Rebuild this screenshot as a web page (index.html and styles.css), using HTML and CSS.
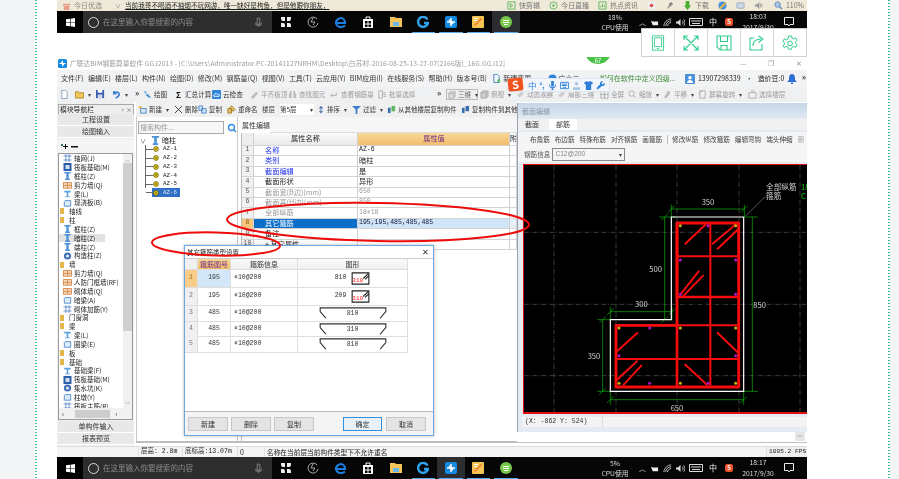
FILE: index.html
```html
<!DOCTYPE html>
<html lang="zh">
<head>
<meta charset="utf-8">
<title>钢筋算量</title>
<link rel="stylesheet" href="styles.css">
</head>
<body>
<svg class="defs" width="0" height="0">
  <symbol id="win" viewBox="0 0 10 10"><path fill="#fff" d="M0 1.400 4.400.8v3.900H0zM5.100.7 10 0v4.700H5.100zM0 5.400h4.400v3.900L0 8.700zM5.100 5.400H10V10l-4.900-.7z"/></symbol>
  <symbol id="fan" viewBox="0 0 12 12"><path fill="#eee" d="M1 1h4v4H3C1 5 1 3 1 1zM7 1h4c0 2 0 4-2 4H7zM1 11V7h2c2 0 2 2 2 4zM11 11H7V7h2c2 0 2 2 2 4z"/></symbol>
  <symbol id="swirl" viewBox="0 0 12 12"><path fill="none" stroke="#aaa" d="M10 3A5 5 0 1 0 11 7M6 2 4 6h4L6 9"/></symbol>
  <symbol id="edge" viewBox="0 0 12 12"><path fill="none" stroke="#1a7fe0" stroke-width="2.200" d="M2 7h8c0-3-2-5-4-5S1 4 1 6.500 3 11 6 11c2 0 3-.6 4-1.500"/></symbol>
  <symbol id="bag" viewBox="0 0 12 12"><path fill="#fff" d="M1 3h10v9H1z"/><path fill="none" stroke="#fff" d="M4 3V1h4v2"/><path fill="#000" d="M3 5h2.500v2.500H3zM6.500 5H9v2.500H6.500zM3 8.500h2.500V11H3zM6.500 8.500H9V11H6.500z"/></symbol>
  <symbol id="folder" viewBox="0 0 12 12"><path fill="#f2c55c" d="M0 1h5l1 1h6v9H0z"/><path fill="#6cb6e8" d="M3 6h6v4H3z"/></symbol>
  <symbol id="gapp" viewBox="0 0 12 12"><path fill="none" stroke="#2fa3ee" stroke-width="2.400" d="M10.500 3.500A5 5 0 1 0 11 7H7"/></symbol>
  <symbol id="gld" viewBox="0 0 12 12"><rect width="12" height="12" rx="2" fill="#1589e0"/><path fill="none" stroke="#fff" stroke-width="1.500" d="M6 2v8M2 6h8M4 4l4 4"/></symbol>
  <symbol id="note" viewBox="0 0 12 12"><rect width="12" height="12" rx="1" fill="#f6c453"/><path fill="#e9783a" d="M2 9 9 2l1 1-7 7z"/><path fill="#fff" d="M2 2h4v1H2zM2 4h3v1H2z"/></symbol>
  <symbol id="greenc" viewBox="0 0 12 12"><circle cx="6" cy="6" r="6" fill="#77c74a"/><path fill="#fff" d="M3 4h6v1H3zM3 6h6v1H3zM4 8h4v1H4z"/></symbol>
  <symbol id="pillar" viewBox="0 0 10 10"><path fill="#4f93d8" d="M1 0h8v2H6.500v6H8v2H2V8h1.500V2H1z"/></symbol>
  <symbol id="grid" viewBox="0 0 10 10"><path fill="none" stroke="#4f7fc9" d="M0 2.500h10M0 7.500h10M3 0v10M7 0v10"/></symbol>
  <symbol id="slab" viewBox="0 0 10 10"><rect width="10" height="10" fill="#2b5ea7"/><rect x="2.500" y="2.500" width="5" height="5" fill="#cfe0f2"/></symbol>
  <symbol id="wall" viewBox="0 0 10 10"><rect y="2" width="10" height="7" fill="#f3d6b8" stroke="#d2813f"/><path stroke="#d2813f" d="M0 5.500h10M5 2v7"/></symbol>
  <symbol id="beam" viewBox="0 0 10 10"><path fill="#5ba1e0" d="M1 1h8v2H6v5h2v1H2V8h2V3H1z"/></symbol>
  <symbol id="plate" viewBox="0 0 10 10"><path fill="#dcebfa" stroke="#3f7cc4" d="M2 2h7v7H1V3z"/></symbol>
  <symbol id="ball" viewBox="0 0 10 10"><circle cx="5" cy="5" r="4.500" fill="#3f6fb6"/><circle cx="5" cy="5" r="2" fill="#dfe9f5"/></symbol>
  <symbol id="dotaz" viewBox="0 0 8 8"><circle cx="4" cy="4" r="3.200" fill="#dcc81e" stroke="#6a5d00"/><circle cx="4" cy="4" r="1" fill="#5a4f00"/></symbol>
  <symbol id="gear" viewBox="0 0 16 16"><path fill="none" stroke="#2ecc8a" d="M6.500 1h3l.5 2 1.700.8 1.900-1 1.500 2.600-1.500 1.400v1.600l1.500 1.400-1.500 2.600-1.900-1-1.700.8-.5 2h-3l-.5-2-1.700-.8-1.900 1L.9 10.800l1.500-1.400V7.800L.9 6.400l1.500-2.600 1.900 1L6 4z"/><circle cx="8" cy="8.500" r="2.400" fill="none" stroke="#2ecc8a"/></symbol>
  <symbol id="hook3" viewBox="0 0 74 16"><path fill="none" stroke="#333" stroke-width="1.200" d="M8 14 2 7V3h70v4l-6 7"/></symbol>
  <symbol id="closedbox" viewBox="0 0 20 14"><path fill="none" stroke="#222" stroke-width="1.200" d="M1 1h18v12H1zM13 7l5-5M15 8l4-4"/></symbol>
</svg>

<div class="pagebg">
  <div class="gutter"></div>
  <div class="dots"></div>
  <div class="pad-left"></div>

  <main class="screen">
    <div class="browserbar">
      <div class="bb-left">
        <svg class="i9" viewBox="0 0 10 10"><path fill="#eb9c86" d="M1 3h8v2H1zM2 5.500h6V10H2z"/></svg>
        <span class="bb-dim">今日优选</span>
        <span class="bb-caret">∨</span>
        <span class="bb-link">当前我哥不喝酒不抽烟不玩网游，唯一缺好是枸鱼，但是他跟你朋友，</span>
      </div>
      <div class="bb-right">
        <span class="bb-item"><svg class="i9" viewBox="0 0 10 10"><path fill="none" stroke="#5cb85c" d="M1 1h8v8H1zM3.500 3l3 2-3 2z"/></svg>快剪辑</span>
        <span class="bb-item"><svg class="i9" viewBox="0 0 10 10"><circle cx="5" cy="5" r="4" fill="none" stroke="#5cb85c"/><path fill="#5cb85c" d="M4 3l3 2-3 2z"/></svg>今日直播</span>
        <span class="bb-item"><svg class="i9" viewBox="0 0 10 10"><path fill="none" stroke="#5cb85c" d="M1 1h8v8H1zM3 5v2M5 3v4M7 4v3"/></svg>热点资讯</span>
        <svg class="i9" viewBox="0 0 10 10"><rect x="1" y="1" width="8" height="8" fill="#eee"/><circle cx="5" cy="5" r="2" fill="#d9534f"/></svg>
        <svg class="i9" viewBox="0 0 10 10"><path fill="#888" d="M2 9l3-5-1-1 3-2 2 3-2 1-1 1z"/></svg>
        <span class="bb-item"><svg class="i9" viewBox="0 0 10 10"><path fill="#4caf2f" d="M3 0h4v5h2L5 10 1 5h2z"/></svg>下载</span>
        <svg class="i9" viewBox="0 0 10 10"><circle cx="5" cy="5" r="4.500" fill="#4a90d9"/><path fill="#e9b83a" d="M1 8l7-7 1 2-6 6z"/></svg>
        <svg class="i9" viewBox="0 0 10 10"><rect x="1" y="2" width="8" height="6" rx="1" fill="#cfd9e6" stroke="#98a8bc"/></svg>
        <svg class="i9" viewBox="0 0 10 10"><path fill="#999" d="M1 4h2l3-3v8L3 6H1z"/><path stroke="#999" fill="none" d="M7 3l2 4M9 3 7 7"/></svg>
        <span class="bb-item bb-zoom"><svg class="i9" viewBox="0 0 10 10"><circle cx="4" cy="4" r="3" fill="#a9c6e8" stroke="#5b86b8"/><path stroke="#5b86b8" stroke-width="1.500" d="M6 6l3 3"/></svg>110%</span>
      </div>
    </div>

    <div class="taskbar">
      <div class="tb-start"><svg class="i10"><use href="#win"/></svg></div>
      <div class="tb-search">
        <span class="cortana"></span>
        <span class="tb-ph">在这里输入你要搜索的内容</span>
        <svg class="mic" viewBox="0 0 8 12"><path fill="none" stroke="#8a8a8a" d="M2.500 1h3v7h-3zM1 6v3h6V6M4 9v2"/></svg>
      </div>
      <div class="tb-apps">
        <span class="app"><svg class="i12"><use href="#fan"/></svg></span>
        <span class="app"><svg class="i12"><use href="#swirl"/></svg></span>
        <span class="app"><svg class="i12"><use href="#edge"/></svg></span>
        <span class="app"><svg class="i12"><use href="#bag"/></svg></span>
        <span class="app"><svg class="i12"><use href="#folder"/></svg></span>
        <span class="app on"><svg class="i12"><use href="#gapp"/></svg></span>
        <span class="app on"><svg class="i12"><use href="#gld"/></svg></span>
        <span class="app on"><svg class="i12"><use href="#note"/></svg></span>
        <span class="app on act"><svg class="i12"><use href="#greenc"/></svg></span>
      </div>
      <div class="tb-cpu"><span>18%</span><span>CPU使用</span></div>
      <div class="tb-tray">
        <span class="tray-ch">︿</span>
        <svg class="i9" viewBox="0 0 10 10"><path fill="#eee" d="M1 3l2 1h6v4H3z"/></svg>
        <svg class="i9" viewBox="0 0 10 10"><path fill="none" stroke="#ccc" d="M1 9C1 5 5 1 9 1M3 9c0-3 3-6 6-6M5 9c0-2 2-4 4-4"/></svg>
        <svg class="i9" viewBox="0 0 10 10"><path fill="#ddd" d="M0 4h2l3-3v8L2 6H0z"/><path fill="none" stroke="#ddd" d="M7 3c1 1 1 3 0 4M8.500 1.500c2 2 2 5 0 7"/></svg>
        <svg class="kbd" viewBox="0 0 14 8"><path fill="none" stroke="#ddd" d="M.5.5h13v7H.5zM2 3h10M3 5.500h8"/></svg>
        <span class="tray-zh">中</span>
        <span class="tray-s">S</span>
      </div>
      <div class="tb-clock"><span>18:03</span><span class="d">2017/9/30</span></div>
      <div class="tb-note"><svg class="i10x" viewBox="0 0 10 10"><path fill="none" stroke="#eee" d="M.5.5h9v7H6L5 9 4 7.500H.5z"/></svg></div>
    </div>

    <div class="gap24"></div>

    <div class="titlebar">
      <svg class="i9" viewBox="0 0 12 12"><use href="#gld"/></svg>
      <span class="title-text">广联达BIM钢筋算量软件 GGJ2013 - [C:\Users\Administrator.PC-20141127NRHM\Desktop\白苏村-2016-08-25-13-27-07(2166版)_16G.GGJ12]</span>
      <span class="winbtns"><span>—</span><span class="wb-max">❐</span><span>✕</span></span>
    </div>

    <nav class="menubar">
      <span>文件(F)</span><span>编辑(E)</span><span>楼层(L)</span><span>构件(N)</span><span>绘图(D)</span><span>修改(M)</span><span>钢筋量(Q)</span><span>视图(V)</span><span>工具(T)</span><span>云应用(Y)</span><span>BIM应用(I)</span><span>在线服务(S)</span><span>帮助(H)</span><span>版本号(B)</span>
      <span class="m-new"><svg class="i9" viewBox="0 0 10 10"><path fill="#eef5ff" stroke="#4a7fc0" d="M2 .5h4l2 2v7H2z"/><path fill="#5cb85c" d="M6 6h3v3H6z"/></svg>新建变更</span>
      <span class="m-gg"><svg class="i9" viewBox="0 0 10 10"><circle cx="5" cy="5" r="4.500" fill="#2f86d9"/></svg>广小二</span>
      <span class="m-hint">如何在软件中定义四级...</span>
      <span class="m-phone"><svg class="i10b" viewBox="0 0 10 10"><rect width="10" height="10" rx="1" fill="#4a90d9"/><circle cx="5" cy="3.800" r="1.800" fill="#fff"/><path fill="#fff" d="M2 9c0-2 1.500-3 3-3s3 1 3 3z"/></svg>13907298339 <i>•</i> 造价豆:0<svg class="i10b" viewBox="0 0 10 10"><path fill="#2f6fd0" d="M5 0c2 0 3 2 3 4v2l2 2H0l2-2V4c0-2 1-4 3-4zM4 8.500h2V10H4z"/></svg></span>
      <span class="more">»</span>
    </nav>

    <div class="toolbar1">
      <svg class="i9" viewBox="0 0 10 10"><path fill="#fff" stroke="#8aa0bd" d="M2 .5h4l2 2v7H2z"/></svg>
      <span class="ti"><svg class="i9" viewBox="0 0 10 10"><path fill="#f0c65a" stroke="#b08a2a" d="M.5 2h3l1 1h5v6H.5z"/></svg><b class="ar">▾</b></span>
      <svg class="i9" viewBox="0 0 10 10"><rect width="9" height="9" fill="#3a5fb0"/><rect x="2" y="0" width="5" height="3" fill="#fff"/><rect x="2" y="5" width="5" height="4" fill="#cfdaf0"/></svg>
      <span class="ti"><svg class="i9" viewBox="0 0 10 10"><path fill="none" stroke="#3a7fd0" stroke-width="1.800" d="M2 1v3h3M2.500 4C4 1.500 8 2 8 5c0 2-2 3-4 4"/></svg><b class="ar">▾</b></span>
      <span class="more">»</span>
      <span class="ti"><svg class="i9" viewBox="0 0 10 10"><path fill="#5b9bd5" d="M1 1l3 1-1 3zM5 4l4 4-2 1-4-3z"/></svg>绘图</span>
      <span class="ti"><b class="sig">Σ</b>汇总计算</span>
      <span class="ti"><svg class="i9" viewBox="0 0 10 10"><rect width="10" height="10" rx="1" fill="#2f86d9"/><path fill="none" stroke="#fff" d="M2 7h6c1-2-1-3-2-2-1-2-3-1-3 0-1 0-2 1-1 2z"/></svg>云检查</span>
      <span class="ti off"><svg class="i9" viewBox="0 0 10 10"><path fill="#bbb" d="M1 8l6-6 2 2-6 6z"/></svg>平齐板顶</span>
      <span class="ti off"><svg class="i9" viewBox="0 0 10 10"><path fill="#bbb" d="M1 4h3v5H1zM6 4h3v5H6zM2 1h2v3H2zM6 1h2v3H6z"/></svg>查找图元</span>
      <span class="ti off"><svg class="i9" viewBox="0 0 10 10"><path fill="none" stroke="#aaa" d="M1 6h6V3M3 4 1 6l2 2"/></svg>查看钢筋量</span>
      <span class="ti off"><svg class="i9" viewBox="0 0 10 10"><path fill="none" stroke="#aaa" d="M1 1h4v8H1zM6 3h3M6 5h3M6 7h3"/></svg>批量选择</span>
      <span class="more">»</span>
      <span class="combo3"><svg class="i8" viewBox="0 0 10 10"><path fill="#ddd" stroke="#aaa" d="M1 3h6v6H1zM1 3l2-2h6v6L7 9"/></svg>三维<b class="ar">▾</b></span>
      <span class="ti off"><svg class="i9" viewBox="0 0 10 10"><path fill="#ccc" stroke="#aaa" d="M1 3h6v6H1zM1 3l2-2h6v6L7 9"/></svg>俯视<b class="ar">▾</b></span>
      <span class="ti off"><svg class="i9" viewBox="0 0 10 10"><path fill="#ccc" d="M1 6l5-4 3 2-5 4z"/></svg>动态观察</span>
      <span class="ti off"><svg class="i9" viewBox="0 0 10 10"><path fill="#ccc" d="M1 6l5-4 3 2-5 4z"/></svg>局部三维</span>
      <span class="ti off"><svg class="i9" viewBox="0 0 10 10"><path fill="none" stroke="#aaa" d="M1 1h8v8H1zM5 1v8M1 5h8"/></svg>全屏</span>
      <span class="ti off"><svg class="i9" viewBox="0 0 10 10"><circle cx="4" cy="4" r="3" fill="none" stroke="#aaa"/><path stroke="#aaa" d="M6 6l3 3"/></svg>缩放<b class="ar">▾</b></span>
      <span class="ti off"><svg class="i9" viewBox="0 0 10 10"><path fill="#bbb" d="M1 9l3-5 1-3 3 1-1 3-3 4z"/></svg>平移<b class="ar">▾</b></span>
      <span class="ti off"><svg class="i9" viewBox="0 0 10 10"><path fill="none" stroke="#aaa" d="M2 1h6v8H2zM1 5a4 4 0 0 1 4-4"/></svg>屏幕旋转<b class="ar">▾</b></span>
      <span class="ti off"><svg class="i9" viewBox="0 0 10 10"><path fill="none" stroke="#aaa" d="M1 3h8v6H1zM3 1h4"/></svg>选择楼层</span>
    </div>

    <div class="workspace">
      <aside class="sidebar">
        <div class="nav-head"><span>模块导航栏</span><span class="nav-pin">ᛜ ×</span></div>
        <div class="nav-btn">工程设置</div>
        <div class="nav-btn">绘图输入</div>
        <div class="nav-tools"><svg class="pm" viewBox="0 0 18 8"><path fill="#111" d="M2 3h2V1h1v2h2v1H5v2H4V4H2zM10 3h7v1.500h-7z"/><path fill="#2a7a5a" d="M0 1h2v2H0z"/></svg></div>
        <div class="nav-list">
          <div class="nav-scroll">
            <ul class="navtree">
              <li class="leaf"><svg><use href="#grid"/></svg>轴网(J)</li>
              <li class="leaf"><svg><use href="#slab"/></svg>筏板基础(M)</li>
              <li class="leaf"><svg><use href="#pillar"/></svg>框柱(Z)</li>
              <li class="leaf"><svg><use href="#wall"/></svg>剪力墙(Q)</li>
              <li class="leaf"><svg><use href="#beam"/></svg>梁(L)</li>
              <li class="leaf"><svg><use href="#plate"/></svg>现浇板(B)</li>
              <li class="grp closed">轴线</li>
              <li class="grp">柱</li>
              <li class="leaf"><svg><use href="#pillar"/></svg>框柱(Z)</li>
              <li class="leaf sel"><svg><use href="#pillar"/></svg>暗柱(Z)</li>
              <li class="leaf"><svg><use href="#pillar"/></svg>端柱(Z)</li>
              <li class="leaf"><svg><use href="#ball"/></svg>构造柱(Z)</li>
              <li class="grp">墙</li>
              <li class="leaf"><svg><use href="#wall"/></svg>剪力墙(Q)</li>
              <li class="leaf"><svg><use href="#wall"/></svg>人防门框墙(RF)</li>
              <li class="leaf"><svg><use href="#wall"/></svg>砌体墙(Q)</li>
              <li class="leaf"><svg><use href="#plate"/></svg>暗梁(A)</li>
              <li class="leaf"><svg><use href="#grid"/></svg>砌体加筋(Y)</li>
              <li class="grp closed">门窗洞</li>
              <li class="grp">梁</li>
              <li class="leaf"><svg><use href="#beam"/></svg>梁(L)</li>
              <li class="leaf"><svg><use href="#plate"/></svg>圈梁(E)</li>
              <li class="grp closed">板</li>
              <li class="grp">基础</li>
              <li class="leaf"><svg><use href="#beam"/></svg>基础梁(F)</li>
              <li class="leaf"><svg><use href="#slab"/></svg>筏板基础(M)</li>
              <li class="leaf"><svg><use href="#ball"/></svg>集水坑(K)</li>
              <li class="leaf"><svg><use href="#plate"/></svg>柱墩(Y)</li>
              <li class="leaf"><svg><use href="#grid"/></svg>筏板主筋(R)</li>
            </ul>
            <div class="vscroll"><span>︿</span><i></i><span>﹀</span></div>
          </div>
          <div class="hscroll"><span>‹</span><i></i><span>›</span></div>
        </div>
        <div class="nav-btn">单构件输入</div>
        <div class="nav-btn">报表预览</div>
      </aside>

      <section class="center">
        <div class="toolbar2">
          <span class="ti"><svg class="i9" viewBox="0 0 10 10"><circle cx="2.500" cy="2.500" r="1.500" fill="#e8b93a"/><rect x="3" y="4" width="6" height="5" fill="#dbe9f8" stroke="#4a87c8"/></svg>新建<b class="ar">▾</b></span>
          <span class="ti"><svg class="i9" viewBox="0 0 10 10"><path stroke="#333" d="M1 1l8 8M9 1 1 9"/></svg>删除</span>
          <span class="ti"><svg class="i9" viewBox="0 0 10 10"><path fill="#cfe2f7" stroke="#4a87c8" d="M1 1h4v5H1zM4 4h5v5H4z"/></svg>复制</span>
          <span class="ti"><svg class="i9" viewBox="0 0 10 10"><path fill="#e5c26a" stroke="#a07a20" d="M1 4h4v5H1zM5 1l4 4-2 2-4-4z"/></svg>重命名</span>
          <span class="t2-floor">楼层</span>
          <span class="t2-sel"><span>第5层</span><b class="ar">▾</b></span>
          <span class="ti"><b class="sort">↕</b>排序<b class="ar">▾</b></span>
          <span class="ti"><svg class="i9" viewBox="0 0 10 10"><path fill="#3a7fd0" d="M0 1h10L6 5v5H4V5z"/></svg>过滤<b class="ar">▾</b></span>
          <span class="ti"><svg class="i9" viewBox="0 0 10 10"><path fill="#3a6fb0" d="M1 3h3v6H1z"/><path fill="#5cb85c" d="M5 1h4v6H5z"/></svg>从其他楼层复制构件</span>
          <span class="ti"><svg class="i9" viewBox="0 0 10 10"><path fill="#3a6fb0" d="M1 3h3v6H1zM5 1h4v6H5z"/></svg>复制构件到其他</span>
        </div>
        <div class="center-row">
          <div class="treepane">
            <div class="searchrow">
              <span class="searchbox">搜索构件...</span>
              <svg class="searchico" viewBox="0 0 10 10"><circle cx="4.500" cy="4.500" r="3" fill="none" stroke="#2e8be0" stroke-width="1.400"/><path stroke="#2e8be0" stroke-width="1.400" d="M6.500 6.500 9 9"/></svg>
            </div>
            <div class="tree">
              <div class="tree-root"><span class="caret">∨</span><svg class="i9" viewBox="0 0 10 10"><use href="#pillar"/></svg>暗柱</div>
              <div class="tree-item"><svg class="i7"><use href="#dotaz"/></svg>AZ-1</div>
              <div class="tree-item"><svg class="i7"><use href="#dotaz"/></svg>AZ-2</div>
              <div class="tree-item"><svg class="i7"><use href="#dotaz"/></svg>AZ-3</div>
              <div class="tree-item"><svg class="i7"><use href="#dotaz"/></svg>AZ-4</div>
              <div class="tree-item"><svg class="i7"><use href="#dotaz"/></svg>AZ-5</div>
              <div class="tree-item last"><span class="tree-sel"><svg class="i7"><use href="#dotaz"/></svg>AZ-6</span></div>
            </div>
          </div>
          <div class="proppane">
            <div class="proptabs"><span class="proptab">属性编辑</span></div>
            <div class="proptable">
              <div class="prow phead"><span class="pn"></span><span class="pk">属性名称</span><span class="pv hl">属性值</span><span class="px">附</span></div>
              <div class="prow"><span class="pn">1</span><span class="pk blue">名称</span><span class="pv mono">AZ-6</span><span class="px"></span></div>
              <div class="prow"><span class="pn">2</span><span class="pk blue">类别</span><span class="pv">暗柱</span><span class="px"></span></div>
              <div class="prow"><span class="pn">3</span><span class="pk blue">截面编辑</span><span class="pv">是</span><span class="px"></span></div>
              <div class="prow"><span class="pn">4</span><span class="pk">截面形状</span><span class="pv">异形</span><span class="px"></span></div>
              <div class="prow"><span class="pn">5</span><span class="pk gray">截面宽(B边)(mm)</span><span class="pv gray mono">650</span><span class="px"></span></div>
              <div class="prow"><span class="pn">6</span><span class="pk gray">截面高(H边)(mm)</span><span class="pv gray mono">850</span><span class="px"></span></div>
              <div class="prow"><span class="pn">7</span><span class="pk gray">全部纵筋</span><span class="pv gray mono">18⚘18</span><span class="px"></span></div>
              <div class="prow psel"><span class="pn">8</span><span class="pk">其它箍筋</span><span class="pv mono">195,195,485,485,485</span><span class="px"></span></div>
              <div class="prow"><span class="pn">9</span><span class="pk">备注</span><span class="pv"></span><span class="px"></span></div>
              <div class="prow"><span class="pn">10</span><span class="pk">+ 其它属性</span><span class="pv"></span><span class="px"></span></div>
            </div>
          </div>
        </div>
      </section>

      <section class="editor">
        <div class="ed-panel">
          <div class="ed-head">截面编辑</div>
          <div class="ed-tabs"><span>截面</span><span class="on">部筋</span></div>
          <div class="ed-tools"><span>布角筋</span><span>布边筋</span><span>特殊布筋</span><span>对齐钢筋</span><span>画箍筋</span><span class="sep"></span><span>修改纵筋</span><span>修改箍筋</span><span>编辑弯钩</span><span>端头伸缩</span><span class="dim">删</span></div>
          <div class="ed-info"><span>钢筋信息</span><span class="ed-combo">C12@200<b class="ar">▾</b></span></div>
          <div class="canvas">
            <svg class="cad" viewBox="-144 -24 852 744">
              <g stroke="#777" stroke-width="1.500" stroke-dasharray="14 5 2 5" fill="none">
                <path d="M-54-24V723M132-24V723M315-24V723M501-24V723M684-24V723M-144 178H708M-144 394H708M-144 608H708"/>
              </g>
              <g stroke="#0a9a0a" stroke-width="2.400" fill="none">
                <path d="M298 108H517M298 95V132M517 95V132M288 118l20-20M507 118l20-20"/>
                <path d="M278 132V440M262 132H312M262 440H300M268 142l20-20M268 450l20-20"/>
                <path d="M115 416H300M115 402V440M300 402V440M105 426l20-20M290 426l20-20"/>
                <path d="M92 440V655M76 440H115M76 655H115M82 450l20-20M82 665l20-20"/>
                <path d="M115 680H515M115 655V695M515 655V695M105 690l20-20M505 690l20-20"/>
                <path d="M541 132V655M515 132H557M515 655H557"/>
              </g>
              <path d="M520 130 580 70" stroke="#888" stroke-width="2" fill="none"/>
              <path d="M298 132H515V655H115V440H298Z" fill="none" stroke="#fff" stroke-width="3.600"/>
              <g stroke="#f60c0c" fill="none" stroke-linecap="round">
                <path stroke-width="8.500" stroke-linejoin="round" d="M315 150H500V642H132V457H315Z"/>
                <path stroke-width="6" d="M415 150V642M315 250H500M132 457H500M137 558H500"/>
                <path stroke-width="8" d="M315 457V642M322 372H495M315 150V372"/>
                <path stroke-width="6" d="M340 212 400 155M422 212 490 155M437 227 497 170M325 365 380 295M335 368 393 308M135 535 196 480M135 620 195 565M155 635 208 578M340 575 405 635M437 480 497 538"/>
              </g>
              <g fill="#c8b414">
                <circle cx="325" cy="158" r="4.500"/><circle cx="491" cy="158" r="4.500"/><circle cx="325" cy="465" r="4.500"/><circle cx="491" cy="465" r="4.500"/><circle cx="141" cy="465" r="4.500"/><circle cx="141" cy="631" r="4.500"/><circle cx="325" cy="631" r="4.500"/><circle cx="491" cy="631" r="4.500"/>
              </g>
              <g fill="#b010c8">
                <circle cx="408" cy="158" r="4.500"/><circle cx="325" cy="261" r="4.500"/><circle cx="491" cy="261" r="4.500"/><circle cx="325" cy="364" r="4.500"/><circle cx="491" cy="364" r="4.500"/><circle cx="233" cy="465" r="4.500"/><circle cx="141" cy="548" r="4.500"/><circle cx="491" cy="548" r="4.500"/><circle cx="233" cy="631" r="4.500"/><circle cx="408" cy="631" r="4.500"/>
              </g>
              <g class="cadtxt" fill="#cfcfcf" text-anchor="middle">
                <text x="408" y="95">350</text>
                <text x="251" y="296">500</text>
                <text x="208" y="401">300</text>
                <text x="66" y="557">350</text>
                <text x="315" y="713">650</text>
                <text x="563" y="404">850</text>
              </g>
              <g class="cadtxt" fill="#cfcfcf">
                <text x="582" y="52">全部纵筋</text>
                <text x="582" y="78">箍筋</text>
              </g>
              <g class="cadtxt" fill="#13d013">
                <text x="687" y="52">18</text>
                <text x="687" y="78">C1</text>
              </g>
            </svg>
          </div>
          <div class="ed-status"><span class="coord">(X: -862 Y: 524)</span><span class="coord-rest"></span></div>
        </div>
        <div class="ed-bottom"><span class="down-arrow">﹀</span></div>
      </section>
    </div>

    <div class="statusbar">
      <span class="s0"></span><span class="s1">层高: 2.8m</span><span class="s2">底标高:13.07m</span><span class="s3">0</span><span class="s4">名称在当前层当前构件类型下不允许重名</span><span class="s5">1005.2 FPS</span>
    </div>

    <div class="taskbar">
      <div class="tb-start"><svg class="i10"><use href="#win"/></svg></div>
      <div class="tb-search">
        <span class="cortana"></span>
        <span class="tb-ph">在这里输入你要搜索的内容</span>
        <svg class="mic" viewBox="0 0 8 12"><path fill="none" stroke="#8a8a8a" d="M2.500 1h3v7h-3zM1 6v3h6V6M4 9v2"/></svg>
      </div>
      <div class="tb-apps">
        <span class="app"><svg class="i12"><use href="#fan"/></svg></span>
        <span class="app"><svg class="i12"><use href="#swirl"/></svg></span>
        <span class="app"><svg class="i12"><use href="#edge"/></svg></span>
        <span class="app"><svg class="i12"><use href="#bag"/></svg></span>
        <span class="app"><svg class="i12"><use href="#folder"/></svg></span>
        <span class="app on"><svg class="i12"><use href="#gapp"/></svg></span>
        <span class="app on act"><svg class="i12"><use href="#gld"/></svg></span>
        <span class="app on"><svg class="i12"><use href="#note"/></svg></span>
        <span class="app on"><svg class="i12"><use href="#greenc"/></svg></span>
      </div>
      <div class="tb-cpu"><span>5%</span><span>CPU使用</span></div>
      <div class="tb-tray">
        <span class="tray-ch">︿</span>
        <svg class="i9" viewBox="0 0 10 10"><path fill="#eee" d="M1 3l2 1h6v4H3z"/></svg>
        <svg class="i9" viewBox="0 0 10 10"><path fill="none" stroke="#ccc" d="M1 9C1 5 5 1 9 1M3 9c0-3 3-6 6-6M5 9c0-2 2-4 4-4"/></svg>
        <svg class="i9" viewBox="0 0 10 10"><path fill="#ddd" d="M0 4h2l3-3v8L2 6H0z"/><path fill="none" stroke="#ddd" d="M7 3c1 1 1 3 0 4M8.500 1.500c2 2 2 5 0 7"/></svg>
        <svg class="kbd" viewBox="0 0 14 8"><path fill="none" stroke="#ddd" d="M.5.5h13v7H.5zM2 3h10M3 5.500h8"/></svg>
        <span class="tray-zh">中</span>
        <span class="tray-s">S</span>
      </div>
      <div class="tb-clock"><span>18:17</span><span class="d">2017/9/30</span></div>
      <div class="tb-note"><svg class="i10x" viewBox="0 0 10 10"><path fill="none" stroke="#eee" d="M.5.5h9v7H6L5 9 4 7.500H.5z"/></svg></div>
    </div>

    <div class="badge">67</div>

    <div class="ime">
      <span class="ime-s">S</span>
      <span class="ime-zh">中</span>
      <span class="ime-dot">°,</span>
      <svg class="i9" viewBox="0 0 10 10"><path fill="#2f7fd6" d="M3.500 0h3v6h-3zM1 4h1c0 2 1 3 3 3s3-1 3-3h1c0 3-2 4-3.500 4.300V9.500H7V10H3v-.5h1.500V8.300C3 8 1 7 1 4z"/></svg>
      <svg class="i9" viewBox="0 0 10 10"><path fill="none" stroke="#2f7fd6" d="M.5 1.500h9v7h-9zM2 3.500h6M2 5h6M3 7h4"/></svg>
      <svg class="i9" viewBox="0 0 10 10"><circle cx="5" cy="3" r="2" fill="#a8c6e6"/><path fill="#a8c6e6" d="M1 10V7h8v3z"/></svg>
      <svg class="i9" viewBox="0 0 10 10"><path fill="#2f7fd6" d="M3 0 5 1l2-1 3 2-1 2-1-.5V10H2V3.500L1 4 0 2z"/></svg>
      <svg class="i9" viewBox="0 0 10 10"><path fill="#2f7fd6" d="M9.500 2 7.500 4 6 2.500l2-2C6-.5 4 1 4.500 3.500L.5 8 2 9.500 6.500 5.500C9 6 10.500 4 9.500 2z"/></svg>
    </div>

    <div class="floatbar">
      <span class="fb"><svg viewBox="0 0 16 20"><path fill="none" stroke="#2ecc8a" stroke-width="1.100" d="M1 1h14v18H1zM3.500 3.500h9v11h-9zM6.500 17h3"/></svg></span>
      <span class="fb"><svg viewBox="0 0 16 16"><path fill="none" stroke="#2ecc8a" stroke-width="1.100" d="M1 1l14 14M15 1 1 15M1 5V1h4M11 1h4v4M15 11v4h-4M5 15H1v-4"/></svg></span>
      <span class="fb"><svg viewBox="0 0 16 16"><path fill="none" stroke="#2ecc8a" stroke-width="1.100" d="M1 1h14v14H4l-3-3zM4.500 1v5.500h7V1M5 15v-4.500h6V15"/></svg></span>
      <span class="fb"><svg viewBox="0 0 16 16"><path fill="none" stroke="#2ecc8a" stroke-width="1.100" d="M5 3H1v12h12V9M4 11c0-5 3-7 8-7M9.500 1 14 4l-4.500 3.500"/></svg></span>
      <span class="fb"><svg viewBox="0 0 16 16"><use href="#gear"/></svg></span>
    </div>

    <div class="dialog">
      <div class="dlg-title"><span>其它箍筋类型设置</span><span class="dlg-x">✕</span></div>
      <div class="dlg-table">
        <div class="drow dhead"><span class="dn"></span><span class="dc hl">箍筋图号</span><span class="dc">箍筋信息</span><span class="dc">图形</span></div>
        <div class="drow r18 first"><span class="dn act">1</span><span class="dc cellsel">195</span><span class="dc info">⚘10@200</span><span class="dc shape"><em>810</em><span class="box"><svg><use href="#closedbox"/></svg><u>310</u></span></span></div>
        <div class="drow r18"><span class="dn">2</span><span class="dc">195</span><span class="dc info">⚘10@200</span><span class="dc shape"><em>209</em><span class="box"><svg><use href="#closedbox"/></svg><u>310</u></span></span></div>
        <div class="drow r16"><span class="dn">3</span><span class="dc">485</span><span class="dc info">⚘10@200</span><span class="dc shape"><span class="hook"><svg><use href="#hook3"/></svg><em>810</em></span></span></div>
        <div class="drow r15"><span class="dn">4</span><span class="dc">485</span><span class="dc info">⚘10@200</span><span class="dc shape"><span class="hook"><svg><use href="#hook3"/></svg><em>310</em></span></span></div>
        <div class="drow r16"><span class="dn">5</span><span class="dc">485</span><span class="dc info">⚘10@200</span><span class="dc shape"><span class="hook"><svg><use href="#hook3"/></svg><em>810</em></span></span></div>
      </div>
      <div class="dlg-foot">
        <span class="btn">新建</span><span class="btn">删除</span><span class="btn">复制</span>
        <span class="btn primary">确定</span><span class="btn">取消</span>
      </div>
    </div>

    <svg class="ovals" viewBox="0 0 750 479" width="750" height="479">
      <ellipse cx="321" cy="222" rx="151" ry="19" transform="rotate(1 321 222)"/>
      <ellipse cx="159" cy="244" rx="64" ry="11.500" transform="rotate(1.500 159 244)"/>
    </svg>
  </main>

  <div class="pad-right"></div>
  <div class="dots"></div>
  <div class="gutter-r"></div>
</div>
</body>
</html>
```

FILE: styles.css
```css
* { box-sizing: border-box; }
html, body { margin: 0; height: 100%; }
body {
  width: 899px;
  height: 479px;
  overflow: hidden;
  background: #fff;
  font-family: "Noto Sans CJK SC", "Liberation Sans", sans-serif;
  font-size: 7px;
  line-height: 1;
  color: #333;
}
.defs { position: absolute; }
.pagebg { display: flex; width: 899px; height: 479px; }
.gutter { width: 35px; background: #f3f4f6; }
.gutter-r { width: 9px; background: #f3f4f6; }
.dots { width: 2px; background-image: linear-gradient(#38bf8d 50%, transparent 50%); background-size: 2px 3px; }
.pad-left { width: 20px; }
.pad-right { width: 81px; }
.screen { position: relative; width: 750px; height: 479px; display: flex; flex-direction: column; overflow: hidden; filter: blur(.5px); background: #fff; }
svg { flex: none; }
.i7 { width: 6px; height: 6px; }
.i8 { width: 8px; height: 8px; }
.i9 { width: 9px; height: 9px; }
.i10 { width: 9px; height: 9px; }
.i10b { width: 10px; height: 10px; }
.i10x { width: 10px; height: 10px; }
.i12 { width: 12px; height: 12px; }
.ar { font-weight: 400; font-size: 6px; color: #444; margin-left: 2px; }
.more { font-size: 8px; font-weight: 700; color: #333; }

/* browser bar */
.browserbar { height: 11px; background: #eee9d9; display: flex; justify-content: space-between; align-items: center; padding: 0 3px 0 5px; color: #777; }
.bb-left, .bb-right, .bb-item { display: flex; align-items: center; }
.bb-left { gap: 3px; }
.bb-dim { color: #8a8a7a; margin-right: 10px; }
.bb-caret { color: #888; font-size: 6px; margin-right: 1px; }
.bb-link { color: #1e1e1e; text-decoration: underline; font-size: 6.600px; }
.bb-right { gap: 9px; }
.bb-item { gap: 3px; }
.bb-zoom { margin-left: 2px; }

/* taskbar */
.taskbar { height: 22px; background: #060606; display: flex; align-items: stretch; color: #ddd; flex: none; }
.tb-start { width: 26px; display: flex; align-items: center; justify-content: center; background: #000; }
.tb-search { width: 189px; background: #2e2e2e; display: flex; align-items: center; padding: 0 10px 0 5px; }
.cortana { width: 11px; height: 11px; border: 1.500px solid #ddd; border-radius: 50%; margin-right: 4px; }
.tb-ph { flex: 1; color: #8c8c8c; font-size: 7.500px; }
.mic { width: 7px; height: 11px; }
.tb-apps { display: flex; width: 248px; }
.app { width: 27.500px; display: flex; align-items: center; justify-content: center; position: relative; }
.app.on::after { content: ""; position: absolute; left: 2px; right: 2px; bottom: 0; height: 1px; background: #59a9ee; }
.app.act { background: #2b2d30; }
.tb-cpu { width: 44px; margin-left: 73px; display: flex; flex-direction: column; align-items: center; justify-content: center; gap: 3px; font-size: 6.800px; }
.tb-tray { display: flex; align-items: center; gap: 4px; width: 100px; padding-left: 2px; }
.tray-ch { font-size: 7px; color: #ddd; }
.kbd { width: 14px; height: 8px; }
.tray-zh { font-size: 8px; color: #eee; margin-left: 2px; }
.tray-s { width: 8px; height: 8px; background: #e9502a; color: #fff; font-size: 6.500px; font-weight: 700; text-align: center; border-radius: 2px; margin-left: 4px; }
.tb-clock { width: 42px; display: flex; flex-direction: column; align-items: center; justify-content: center; gap: 4px; font-size: 6.800px; }
.tb-note { flex: 1; display: flex; align-items: center; justify-content: center; padding-right: 8px; }

.gap24 { height: 24px; flex: none; }

/* title + menu */
.titlebar { height: 13px; display: flex; align-items: center; padding-left: 1px; gap: 3px; color: #9a9a9a; background: #fff; flex: none; }
.title-text { flex: 1; font-size: 6.700px; white-space: nowrap; letter-spacing: .1px; }
.winbtns { display: flex; gap: 22px; width: 67px; color: #999; font-size: 7px; }
.menubar { height: 17px; background: #f2f3f5; display: flex; align-items: center; gap: 4.300px; padding-left: 4px; color: #333; white-space: nowrap; flex: none; font-size: 7px; overflow: hidden; }
.menubar span { display: inline-flex; align-items: center; gap: 2px; }
.m-new { margin-left: 1px; }
.m-gg { margin-left: 12px; }
.m-hint { color: #3f8a3a; margin-left: 16px; width: 86px; }
.m-phone { margin-left: 1px; gap: 3px !important; color: #222; }
.m-phone i { font-style: normal; margin: 0 2px; }
.more { margin-left: auto; }
.menubar .more { margin: 0 0 4px auto; padding-right: 1px; }

/* toolbar 1 */
.toolbar1 { height: 15px; flex: none; background: #eff0f2; display: grid; align-items: center; padding-left: 3px; white-space: nowrap; overflow: hidden; font-size: 6.600px; grid-template-columns: 15px 21px 16px 23px 8px 32px 37px 38px 38px 42px 48px 59px 10px 33px 36px 41px 43px 28px 35px 35px 50px auto; }
.toolbar1 .more { margin: 0 0 3px 0; }
.ti { display: inline-flex; align-items: center; gap: 2px; color: #333; }
.ti.off { color: #9a9a9a; }
.sig { font-size: 8px; color: #111; margin: 0 2px 0 1px; }
.sort { color: #2a5fa0; font-size: 8px; }
.combo3 { display: inline-flex; align-items: center; gap: 2px; border: 1px solid #bbb; height: 11px; background: #eee; margin-right: 2px; margin-left: -1px; padding: 0 1px; color: #666; }

/* workspace */
.workspace { flex: none; height: 344px; display: flex; background: #fff; }
.sidebar { width: 77px; display: flex; flex-direction: column; background: #f0f0f0; flex: none; padding-left: 1px; }
.nav-head { height: 10px; margin-top: 2px; border: 1px solid #aaa; border-width: 1px 1px 0; background: #eee; display: flex; justify-content: space-between; align-items: center; padding: 0 1px; color: #222; font-size: 6.800px; }
.nav-pin { color: #666; font-size: 6px; }
.nav-btn { height: 12px; background: #e8e8e8; text-align: center; border-bottom: 1px solid #fff; line-height: 11px; color: #333; flex: none; }
.nav-tools { height: 13px; background: #f5f5f5; display: flex; align-items: center; padding-left: 3px; margin-top: 2px; flex: none; }
.pm { width: 18px; height: 8px; }
.nav-list { width: 75px; border: 1px solid #9a9a9a; background: #fff; flex: none; height: 267px; display: flex; flex-direction: column; }
.nav-scroll { display: flex; flex: 1; min-height: 0; }
.navtree { list-style: none; margin: 0; padding: 0; flex: 1; overflow: hidden; font-size: 6.500px; white-space: nowrap; }
.navtree li { height: 8.850px; display: flex; align-items: center; color: #222; }
.leaf { padding-left: 4px; gap: 2px; }
.leaf svg { width: 9px; height: 8px; }
.leaf.sel { background: #e2e2e2; margin-right: 18px; }
.grp { padding-left: 1px; position: relative; }
.grp::before { content: ""; width: 4px; height: 6px; background: #e2b64a; margin-right: 5px; }
.vscroll { width: 9px; background: #f1f1f1; display: flex; flex-direction: column; color: #555; font-size: 5px; text-align: center; }
.vscroll span { background: #f1f1f1; height: 9px; line-height: 9px; }
.vscroll i { flex: none; height: 168px; background: #cfcfcf; }
.vscroll span:last-child { margin-top: auto; }
.hscroll { height: 11px; display: flex; background: #f1f1f1; align-items: center; color: #333; font-size: 7px; padding: 0 3px; }
.hscroll i { width: 35px; height: 8px; background: #cdcdcd; margin: 0 3px 0 11px; }
.hscroll span:last-child { margin-left: 2px; }
.nav-list + .nav-btn { margin-top: 1px; }

.center { width: 381px; flex: none; background: #fff; margin-left: 2px; position: relative; display: flex; flex-direction: column; overflow: hidden; }
.toolbar2 { height: 15px; padding-left: 2px; display: grid; align-items: center; white-space: nowrap; overflow: hidden; background: #f0f0f0; font-size: 6.500px; grid-template-columns: 36px 24px 29px 35px 18px 37px 35px 35px 74px auto; flex: none; }
.t2-floor { color: #444; }
.t2-sel { background: #fff; display: inline-flex; justify-content: space-between; align-items: center; height: 11px; width: 34px; padding: 0 1px 0 0; }
.center-row { flex: 1; display: flex; gap: 2px; border-bottom: 2px solid #bdbdbd; margin-bottom: 3px; min-height: 0; }
.treepane { width: 102px; border: 1px solid #c9c9c9; border-width: 0 1px; display: flex; flex-direction: column; background: #fff; }
.searchrow { display: flex; align-items: center; height: 15px; margin: 3px 0 0 1px; gap: 3px; }
.searchbox { width: 86px; height: 13px; border: 1px solid #aaa; color: #9a9a9a; line-height: 11px; padding-left: 1px; background: #f7f7f7; }
.searchico { width: 10px; height: 10px; }
.tree { padding: 1px 0 0 3px; color: #222; }
.tree-root { height: 9px; display: flex; align-items: center; gap: 2px; }
.caret { font-size: 6px; color: #555; width: 9px; }
.tree-item { height: 8.700px; display: flex; align-items: center; gap: 2px; margin-left: 5px; padding-left: 7px; border-left: 1px solid #666; position: relative; font-family: "Liberation Mono", monospace; font-size: 5.800px; }
.tree-item::before { content: ""; position: absolute; left: 0; top: 4px; width: 7px; border-top: 1px solid #666; }
.tree-item.last { border-left: 0; margin-left: 6px; padding-left: 6px; }
.tree-sel { background: #2f6fc4; color: #dfe8f5; display: inline-flex; align-items: center; gap: 2px; height: 8.700px; padding: 0 0 0 1px; width: 28px; }
.tree-item svg { margin-right: 2px; }

.proppane { flex: 1; display: flex; flex-direction: column; min-width: 0; }
.proptabs { height: 16px; background: #f6f6f6; padding: 3px 0 0 0; border-bottom: 1px solid #ddd; }
.proptab { display: inline-block; background: #fff; height: 13px; width: 30px; padding: 2px 0 0 2px; color: #333; }
.proptable { flex: 1; border-left: 1px solid #bbb; margin-left: 1px; }
.prow { height: 10.400px; display: grid; grid-template-columns: 12px 104px 152px 1fr; border-bottom: 1px solid #d4d4d4; }
.prow > span { display: flex; align-items: center; border-right: 1px solid #d0d0d0; white-space: nowrap; overflow: hidden; font-size: 7.200px; color: #222; }
.pn { background: #f1f1f1; justify-content: center; font-family: "Liberation Mono", monospace; font-size: 6.500px !important; color: #555 !important; }
.pk { padding-left: 11px; }
.pv { padding-left: 1px; }
.px { background: #fff; }
.phead { height: 13px; }
.phead .pk { justify-content: center; padding: 0; background: linear-gradient(#fafafa, #e9e9e9); }
.phead .pv { justify-content: center; }
.phead .pn { background: #eee; }
.hl { background: linear-gradient(#f9d99a, #f3bd6a) !important; color: #6e2a86 !important; }
.blue { color: #1f2fe8 !important; }
.gray { color: #9a9a9a !important; }
.mono { font-family: "Liberation Mono", "Noto Sans CJK SC", monospace !important; font-size: 6.500px !important; }
.psel .pn { background: #f8c77c; color: #8a5a10 !important; }
.psel .pk { background: #0c6ec9; color: #fff; }
.psel .pv { background: #cfe4f7; color: #113; }
.psel .px { background: #e6f0fa; }

.editor { flex: 1; display: flex; flex-direction: column; background: #fff; min-width: 0; }
.ed-panel { margin-top: 1px; height: 329px; flex: none; background: #e4ebf3; border-left: 1px solid #9aa4b0; display: flex; flex-direction: column; }
.ed-head { height: 16px; background: linear-gradient(#c5d6e8, #e2eaf3); color: #8d98a5; line-height: 16px; padding-left: 4px; flex: none; }
.ed-tabs { height: 11px; display: flex; align-items: center; background: #f1f1f1; padding-left: 0; flex: none; }
.ed-tabs span { padding: 2px 7px; height: 11px; color: #333; }
.ed-tabs .on { background: #fff; margin-left: 3px; }
.ed-tools { height: 15px; margin-top: 2px; display: flex; align-items: center; gap: 5px; padding-left: 12px; background: #f5f5f5; white-space: nowrap; overflow: hidden; flex: none; color: #444; font-size: 6.600px; }
.ed-tools .sep { width: 1px; height: 9px; background: #bbb; margin: 0 -1px 0 0; }
.ed-tools .dim { color: #aaa; }
.ed-info { height: 15px; display: flex; align-items: center; gap: 2px; padding-left: 6px; background: #f5f5f5; color: #555; flex: none; font-size: 6.600px; }
.ed-combo { width: 73px; height: 13px; border: 1px solid #888; background: #f5f5f5; display: flex; justify-content: space-between; align-items: center; padding: 0 2px; color: #888; font-family: "Liberation Sans", sans-serif; }
.canvas { flex: none; margin-top: 2px; margin-left: 5px; height: 250px; background: #000; border-top: 1px solid #e01010; border-bottom: 2px solid #e01010; border-left: 1px solid #e01010; overflow: hidden; }
.cad { display: block; width: 284px; height: 248px; }
.cadtxt text { font-size: 23px; font-family: "Noto Sans CJK SC", "Liberation Sans", sans-serif; }
.ed-status { height: 10px; margin-top: 3px; display: flex; background: #f3f3f3; margin-left: 4px; flex: none; }
.coord { width: 81px; border-right: 1px solid #ddd; font-family: "Liberation Mono", monospace; font-size: 6.500px; line-height: 10px; padding-left: 3px; color: #333; }
.ed-bottom { height: 11px; flex: none; border-bottom: 1px solid #c0c0c0; display: flex; justify-content: flex-end; padding-right: 2px; }
.down-arrow { width: 10px; height: 9px; background: #e6e6e6; text-align: center; font-size: 5px; line-height: 9px; color: #444; }

.statusbar { height: 11px; flex: none; background: #f4f4f4; border-top: 1px solid #ddd; display: flex; align-items: center; color: #222; white-space: nowrap; font-size: 7px; }
.statusbar > span { height: 100%; display: flex; align-items: center; border-right: 1px solid #e0e0e0; padding-left: 2px; }
.s0 { width: 82px; }
.s1 { width: 44px; font-family: "Liberation Mono", "Noto Sans CJK SC", monospace; font-size: 6.500px; }
.s2 { width: 55px; font-family: "Liberation Mono", "Noto Sans CJK SC", monospace; font-size: 6.500px; }
.s3 { width: 27px; }
.s4 { flex: 1; font-size: 6.700px; }
.s5 { width: 40px; border-right: 0 !important; font-family: "Liberation Mono", monospace; font-size: 6.200px; background: #eee; }

/* overlays */
.badge { position: absolute; left: 528px; top: 38px; width: 26px; height: 26px; border-radius: 50%; background: #4cc24a; color: #fff; font-size: 6px; text-align: center; padding-top: 20px; clip-path: inset(19px 0 0 0); }
.ime { position: absolute; left: 451px; top: 78px; height: 14px; width: 102px; display: flex; align-items: center; gap: 3px; background: #f2f6fb; border: 1px solid #dde6f0; padding-left: 19px; }
.ime-s { position: absolute; left: -1px; top: -1px; width: 15px; height: 13px; background: #f0531f; color: #fff; font-size: 11px; font-weight: 700; text-align: center; line-height: 13px; border-radius: 2px; transform: rotate(-6deg); }
.ime-zh { color: #2f7fd6; font-size: 8.500px; }
.ime-dot { color: #2f7fd6; font-size: 7px; font-weight: 700; }
.floatbar { position: absolute; left: 584px; top: 28px; width: 166px; height: 29px; background: #fff; border: 1px solid #d0d0d0; display: flex; }
.fb { flex: 1; display: flex; align-items: center; justify-content: center; border-right: 1px solid #d8d8d8; }
.fb:last-child { border-right: 0; }
.fb svg { width: 16px; height: 16px; }
.dialog { position: absolute; left: 127px; top: 245px; width: 250px; height: 191px; background: #fff; border: 1px solid #6aa9e4; box-shadow: 0 0 3px rgba(0,0,0,.3); display: flex; flex-direction: column; }
.dlg-title { height: 13px; flex: none; display: flex; justify-content: space-between; align-items: center; padding: 0 4px 0 2px; color: #222; border-bottom: 1px solid #ccc; font-size: 6.500px; }
.dlg-x { font-size: 8px; color: #333; }
.dlg-table { flex: 1; width: 223px; min-height: 0; }
.drow { display: grid; grid-template-columns: 13px 33px 67px 110px; border-bottom: 1px solid #dedede; }
.drow > span { display: flex; align-items: center; justify-content: center; border-right: 1px solid #dedede; color: #333; }
.dhead { height: 11px; }
.dhead .dc { background: linear-gradient(#fafafa, #eee); }
.dn { background: #f0f0f0; color: #777 !important; font-family: "Liberation Mono", monospace; font-size: 6.500px; }
.dn.act { background: #f8cd8a; color: #a06a20 !important; }
.cellsel { background: #d3e7f8; }
.r18 { height: 18px; }
.r16 { height: 16px; }
.r15 { height: 15px; }
.dc { font-family: "Liberation Mono", "Noto Sans CJK SC", monospace; font-size: 6.500px; }
.dhead .dc { font-family: "Noto Sans CJK SC", sans-serif; font-size: 7px; }
.info { justify-content: flex-start !important; padding-left: 3px; }
.shape { gap: 5px; }
.shape em { font-style: normal; }
.box { position: relative; width: 19px; height: 13px; }
.box svg { width: 19px; height: 13px; display: block; }
.box u { position: absolute; left: 1px; bottom: 1px; color: #f22; text-decoration: none; font-size: 6px; }
.hook { position: relative; width: 74px; height: 15px; display: flex; align-items: center; justify-content: center; padding-top: 2px; }
.hook svg { position: absolute; left: 0; top: -1px; width: 74px; height: 15px; }
.dlg-foot { height: 24px; flex: none; border-top: 1px solid #bbb; background: #f4f4f4; display: grid; grid-template-columns: 40px 40px 40px 1fr 40px 40px; gap: 3px; padding: 5px 7px 5px 3px; }
.btn { background: #e4e4e4; border: 1px solid #c8c8c8; text-align: center; line-height: 12px; color: #333; height: 14px; }
.btn.primary { grid-column: 5; margin-right: 1px; background: #e8f0f8; border: 1px solid #2e8fe0; }
.btn:last-child { grid-column: 6; }
.ovals { position: absolute; left: 0; top: 0; pointer-events: none; }
.ovals ellipse { fill: none; stroke: #ee0b0b; stroke-width: 2; }
```
